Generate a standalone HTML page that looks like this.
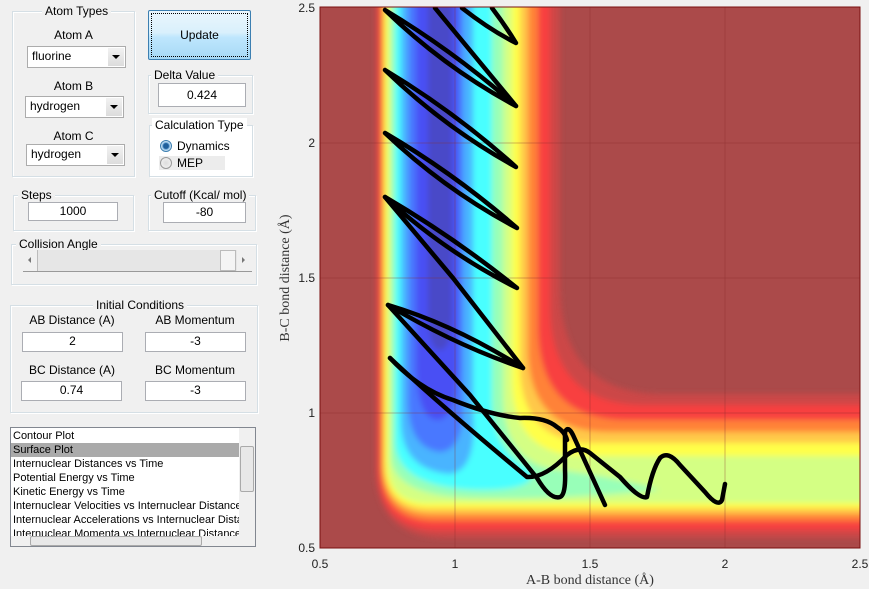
<!DOCTYPE html>
<html><head><meta charset="utf-8"><style>
*{box-sizing:border-box}
body{margin:0;width:869px;height:589px;background:#f0f0f0;font-family:"Liberation Sans",Arial,sans-serif;font-size:11px;color:#000;position:relative;overflow:hidden}
.a{position:absolute}
.grp{position:absolute;border:1px solid #d5dfe5;box-shadow:inset 1px 1px 0 #fff, 1px 1px 0 #fff}
.gt{position:absolute;top:-8px;background:#f0f0f0;padding:0 3px;white-space:nowrap;font-size:12px}
.lbl{position:absolute;text-align:center;font-size:12px;white-space:nowrap}
.inp{position:absolute;background:#fff;border:1px solid #abadb3;text-align:center;font-size:12px;line-height:17px}
.sel{position:absolute;background:#fff;border:1px solid #acacac;font-size:12px;line-height:19px;padding-left:4px}
.sel b{position:absolute;right:1px;top:1px;bottom:1px;width:16px;background:linear-gradient(#f2f2f2,#dcdcdc);}
.sel b:after{content:"";position:absolute;left:4px;top:7px;border-left:4px solid transparent;border-right:4px solid transparent;border-top:4px solid #000}
.li{position:absolute;left:2px;height:14px;line-height:14px;font-size:11px;white-space:nowrap}
</style></head><body>

<div class="grp" style="left:12px;top:11px;width:123px;height:166px"><span class="gt" style="left:29px">Atom Types</span></div>
<div class="lbl" style="left:12px;width:123px;top:28px">Atom A</div>
<div class="sel" style="left:27px;top:46px;width:99px;height:22px">fluorine<b></b></div>
<div class="lbl" style="left:12px;width:123px;top:79px">Atom B</div>
<div class="sel" style="left:25px;top:96px;width:99px;height:22px">hydrogen<b></b></div>
<div class="lbl" style="left:12px;width:123px;top:129px">Atom C</div>
<div class="sel" style="left:26px;top:144px;width:99px;height:22px">hydrogen<b></b></div>

<div class="a" style="left:148px;top:10px;width:103px;height:50px;border:1px solid #3c7fb1;border-radius:2px;background:linear-gradient(#eaf6fd 0%,#d9f0fc 45%,#bee6fd 55%,#a7d9f5 100%);text-align:center;line-height:48px;font-size:12px"><div style="position:absolute;inset:2px;border:1px dotted #000"></div>Update</div>

<div class="grp" style="left:148px;top:75px;width:105px;height:39px"><span class="gt" style="left:2px">Delta Value</span></div>
<div class="inp" style="left:158px;top:83px;width:88px;height:24px;line-height:22px">0.424</div>

<div class="grp" style="left:149px;top:125px;width:104px;height:52px;background:#fff"><span class="gt" style="left:2px;background:#fff">Calculation Type</span></div>
<div class="a" style="left:159px;top:156px;width:66px;height:14px;background:#ececec"></div>
<div class="a" style="left:160px;top:140px;width:12px;height:12px;border-radius:50%;border:1px solid #3c7fb1;background:radial-gradient(circle,#1e5f9c 0 2.5px,#7fb6e0 3.5px,#e6f1fa 5px)"></div>
<div class="a" style="left:177px;top:139px;font-size:12px">Dynamics</div>
<div class="a" style="left:160px;top:157px;width:12px;height:12px;border-radius:50%;border:1px solid #999;background:radial-gradient(circle,#ddd,#f6f6f6)"></div>
<div class="a" style="left:177px;top:156px;font-size:12px">MEP</div>

<div class="grp" style="left:13px;top:195px;width:121px;height:36px"><span class="gt" style="left:4px">Steps</span></div>
<div class="inp" style="left:28px;top:202px;width:90px;height:19px">1000</div>
<div class="grp" style="left:148px;top:195px;width:108px;height:36px"><span class="gt" style="left:2px">Cutoff (Kcal/ mol)</span></div>
<div class="inp" style="left:163px;top:202px;width:83px;height:21px;line-height:19px">-80</div>

<div class="grp" style="left:11px;top:244px;width:246px;height:41px"><span class="gt" style="left:4px">Collision Angle</span></div>
<div class="a" style="left:23px;top:250px;width:229px;height:22px;background:#e6e6e6;border-bottom:1px solid #999">
 <div class="a" style="left:0;top:0;width:15px;height:21px;background:#f0f0f0;border-right:1px solid #bbb"><span style="position:absolute;left:5px;top:7px;border-top:3px solid transparent;border-bottom:3px solid transparent;border-right:3px solid #777"></span></div>
 <div class="a" style="left:197px;top:0;width:16px;height:21px;background:#f4f4f4;border:1px solid #bbb"></div>
 <div class="a" style="right:0;top:0;width:15px;height:21px;background:#f0f0f0"><span style="position:absolute;left:5px;top:7px;border-top:3px solid transparent;border-bottom:3px solid transparent;border-left:3px solid #777"></span></div>
</div>

<div class="grp" style="left:10px;top:305px;width:248px;height:108px"><span class="gt" style="left:82px">Initial Conditions</span></div>
<div class="lbl" style="left:22px;width:100px;top:313px">AB Distance (A)</div>
<div class="lbl" style="left:145px;width:100px;top:313px">AB Momentum</div>
<div class="inp" style="left:22px;top:332px;width:101px;height:20px">2</div>
<div class="inp" style="left:145px;top:332px;width:101px;height:20px">-3</div>
<div class="lbl" style="left:22px;width:100px;top:363px">BC Distance (A)</div>
<div class="lbl" style="left:145px;width:100px;top:363px">BC Momentum</div>
<div class="inp" style="left:21px;top:381px;width:101px;height:20px">0.74</div>
<div class="inp" style="left:145px;top:381px;width:101px;height:20px">-3</div>

<div class="a" style="left:10px;top:427px;width:246px;height:120px;background:#fff;border:1px solid #828790;overflow:hidden">
 <div class="a" style="left:0;top:15px;width:228px;height:14px;background:#aaa"></div>
 <div class="li" style="top:1px">Contour Plot</div>
 <div class="li" style="top:15px">Surface Plot</div>
 <div class="li" style="top:29px">Internuclear Distances vs Time</div>
 <div class="li" style="top:43px">Potential Energy vs Time</div>
 <div class="li" style="top:57px">Kinetic Energy vs Time</div>
 <div class="li" style="top:71px;width:226px;overflow:hidden">Internuclear Velocities vs Internuclear Distance</div>
 <div class="li" style="top:85px;width:226px;overflow:hidden">Internuclear Accelerations vs Internuclear Distance</div>
 <div class="li" style="top:99px;width:226px;overflow:hidden">Internuclear Momenta vs Internuclear Distance</div>
 <div class="a" style="left:228px;top:0;width:16px;height:108px;background:#f0f0f0">
  <div class="a" style="left:1px;top:18px;width:14px;height:46px;background:#e8e8e8;border:1px solid #aaa;border-radius:2px"></div>
 </div>
 <div class="a" style="left:0;top:108px;width:244px;height:11px;background:#f0f0f0">
  <div class="a" style="left:19px;top:0;width:172px;height:10px;background:#e8e8e8;border:1px solid #aaa;border-radius:2px"></div>
 </div>
</div>

<svg class="a" style="left:0;top:0" width="869" height="589">
<defs>
<clipPath id="c"><rect x="320" y="7" width="540" height="541"/></clipPath>
<filter id="bl" x="-10%" y="-10%" width="120%" height="120%"><feGaussianBlur stdDeviation="3"/></filter>
</defs>
<g clip-path="url(#c)">
<rect x="320" y="7" width="540" height="541" fill="#ab4a4a"/>
<g filter="url(#bl)">
<path d="M376,0 H560 V290 Q562,392 660,394 H880 V538 H446 Q376,538 376,468 Z" fill="#cc4646"/>
<path d="M378,0 H550 V310 Q552,404 642,405 H880 V530 H440 Q378,530 378,468 Z" fill="#f84040"/>
<path d="M381,0 H538 V330 Q540,419 625,420 H880 V521 H436 Q381,521 381,466 Z" fill="#ff8238"/>
<path d="M383,0 H528 V350 Q529,432 608,432 H880 V514 H433 Q383,514 383,464 Z" fill="#ffc848"/>
<path d="M385,0 H520 V365 Q520,443 595,443 H880 V508 H430 Q385,508 385,463 Z" fill="#ffff48"/>
<path d="M388,0 H512 V380 Q512,456 585,456 H880 V503 H428 Q388,503 388,463 Z" fill="#d4ff84"/>
<path d="M391,0 H503 V395 Q503,465 560,470 Q620,478 660,490 Q560,500 470,498 Q391,495 391,455 Z" fill="#98ffb8"/>
<path d="M395,0 H492 V400 Q492,450 530,470 Q540,490 480,490 Q395,488 395,440 Z" fill="#48ffff"/>
<path d="M401,0 H473 V410 Q478,470 450,474 Q401,470 401,420 Z" fill="#48b4ff"/>
<path d="M408,0 H463 V400 Q465,450 440,452 Q408,448 408,400 Z" fill="#4a78ff"/>
<path d="M416,0 H458 V360 Q458,420 437,420 Q416,418 416,360 Z" fill="#4850f4"/>
<path d="M428,0 H452 V310 Q452,350 440,350 Q428,350 428,310 Z" fill="#4a4ac8"/>
</g>
<g stroke="#8a2a2a" stroke-opacity="0.35" stroke-width="1">
<line x1="455" y1="7" x2="455" y2="548"/><line x1="590" y1="7" x2="590" y2="548"/><line x1="725" y1="7" x2="725" y2="548"/>
<line x1="320" y1="143" x2="860" y2="143"/><line x1="320" y1="278" x2="860" y2="278"/><line x1="320" y1="413" x2="860" y2="413"/>
</g>
<g fill="none" stroke="#000" stroke-width="4.5" stroke-linecap="round" stroke-linejoin="round">
<path d="M492,8 Q505,25 516,43 Q490,30 462,8"/>
<path d="M435,8 L516,106"/>
<path d="M385,10 Q455,52 516,106 Q445,68 385,10"/>
<path d="M385,70 Q455,112 516,167 Q445,128 385,70"/>
<path d="M385,133 Q455,174 517,228 Q445,190 385,133"/>
<path d="M385,197 Q455,238 517,288 Q445,252 385,197"/>
<path d="M385,197 L453,278 L523,368"/>
<path d="M388,305 Q455,325 523,368 Q455,345 388,305"/>
<path d="M388,305 L470,395 L537,478 Q550,500 560,497 Q566,495 565,470 L565,432 Q568,425 573,435 L605,505"/>
<path d="M390,358 Q440,405 527,477 Q545,478 567,455 Q580,445 590,453 L620,477 Q640,500 647,497 Q652,470 660,458 Q668,450 680,465 L705,492 Q718,508 722,500 L725,484"/>
<path d="M390,358 Q420,390 453,400 Q490,415 520,418 Q545,417 557,427 Q565,432 567,440"/>
</g>
</g>
<rect x="320" y="7" width="540" height="541" fill="none" stroke="#7a1010" stroke-width="1"/>
<g font-family="Liberation Sans,Arial,sans-serif" font-size="12" fill="#222">
<text x="320" y="568" text-anchor="middle">0.5</text>
<text x="455" y="568" text-anchor="middle">1</text>
<text x="590" y="568" text-anchor="middle">1.5</text>
<text x="725" y="568" text-anchor="middle">2</text>
<text x="860" y="568" text-anchor="middle">2.5</text>
<text x="315" y="12" text-anchor="end">2.5</text>
<text x="315" y="147" text-anchor="end">2</text>
<text x="315" y="282" text-anchor="end">1.5</text>
<text x="315" y="417" text-anchor="end">1</text>
<text x="315" y="552" text-anchor="end">0.5</text>
</g>
<g font-family="Liberation Serif,serif" font-size="14" fill="#333">
<text x="590" y="584" text-anchor="middle">A-B bond distance (Å)</text>
<text transform="translate(289,278) rotate(-90)" text-anchor="middle">B-C bond distance (Å)</text>
</g>
</svg>
</body></html>
